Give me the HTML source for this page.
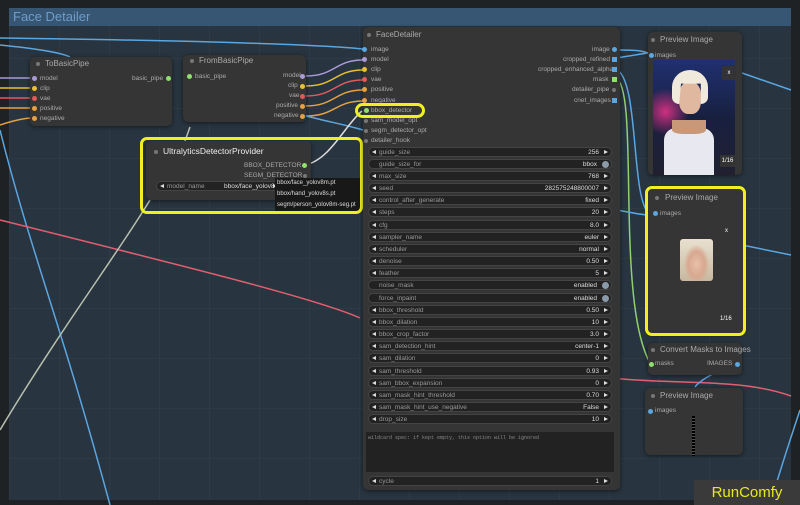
<!DOCTYPE html>
<html><head><meta charset="utf-8"><style>
*{margin:0;padding:0;box-sizing:border-box}
body{width:800px;height:505px;overflow:hidden;background:#1f2224;font-family:"Liberation Sans",sans-serif;position:relative;color:#aaa}
.grp{position:absolute;left:9px;top:8px;width:782px;height:492px;background:#28343f;
background-image:linear-gradient(#2e3a45 1px,transparent 1px),linear-gradient(90deg,#2e3a45 1px,transparent 1px);background-size:50px 50px}
.gt{position:absolute;left:9px;top:8px;width:782px;height:18px;background:#375673;color:#6f9dc8;font-size:13px;padding-left:4px;line-height:18px}
.node{position:absolute;background:#353535;border-radius:5px;box-shadow:0 1px 4px rgba(0,0,0,.5)}
.tt{position:absolute;font-size:8px;color:#aaa}
.dot{position:absolute;width:5px;height:5px;border-radius:50%}
.lab{position:absolute;font-size:6.5px;color:#aaa;white-space:nowrap}
.w{position:absolute;left:368px;width:244px;height:10px;background:#222;border-radius:5px;border:1px solid #444;font-size:6.5px;line-height:9px;color:#999}
.w .n{position:absolute;left:10px}
.w .v{position:absolute;right:12px;color:#ddd}
.w:before{content:"";position:absolute;left:3px;top:2px;border-right:4px solid #ddd;border-top:2.5px solid transparent;border-bottom:2.5px solid transparent}
.w:after{content:"";position:absolute;right:3px;top:2px;border-left:4px solid #ddd;border-top:2.5px solid transparent;border-bottom:2.5px solid transparent}
.w.t:before,.w.t:after{display:none}
.w.t .v{right:14px}
.w.t .tg{position:absolute;right:2px;top:1px;width:7px;height:7px;border-radius:50%;background:#8a9aa8}
.yb{position:absolute;border:3px solid #f0f020;border-radius:7px}
.g{position:absolute;width:4px;height:4px;border-radius:50%;background:#777}
</style></head><body>
<div class="grp"></div>
<div class="gt">Face Detailer</div>

<svg style="position:absolute;left:0;top:0" width="800" height="505" fill="none" stroke-width="1.5">
<path d="M0 38 C150 40,300 43,363 49" stroke="#5aa6e0"/>
<path d="M0 45 C30 48,60 52,70 57" stroke="#5aa6e0"/>
<path d="M0 78 L33 78" stroke="#a99ad8"/><path d="M0 88 L33 88" stroke="#e8c030"/>
<path d="M0 98 L33 98" stroke="#e05a5a"/><path d="M0 108 L33 108" stroke="#e8a040"/>
<path d="M0 125 C15 120,25 118,33 118" stroke="#e8a040"/>
<path d="M0 130 C30 250,60 320,110 505" stroke="#5aa6e0"/>
<path d="M306 76 C335 76,335 60,363 60" stroke="#a99ad8"/>
<path d="M306 86 C335 86,335 70,363 70" stroke="#e8c030"/>
<path d="M306 96 C335 96,335 80,363 80" stroke="#e05a5a"/>
<path d="M306 106 C335 106,335 90,363 90" stroke="#e8a040"/>
<path d="M306 116 C335 116,335 101,363 101" stroke="#e8a040"/>
<path d="M306 116 C330 122,350 126,363 130" stroke="#5aa6e0"/>
<path d="M305 165 C330 160,345 125,362 111" stroke="#ddd"/>
<path d="M0 220 C200 270,320 300,360 318" stroke="#e06070"/>
<path d="M610 378 C680 385,740 378,791 396" stroke="#e06070"/>
<path d="M150 200 C120 250,60 330,0 430" stroke="#b8c0b0"/>
<path d="M190 127 L180 155" stroke="#b8c0b0"/>
<path d="M616 50 C630 50,640 50,648 53" stroke="#5aa6e0"/>
<path d="M616 58 C630 56,640 54,648 53" stroke="#5aa6e0"/>
<path d="M616 69 C640 80,630 200,650 215" stroke="#5aa6e0"/>
<path d="M616 78 C640 90,615 300,650 363" stroke="#90d070"/>
<path d="M616 210 C630 212,640 215,650 215" stroke="#5aa6e0"/>
<path d="M742 73 L791 90" stroke="#5aa6e0"/><path d="M742 245 L791 255" stroke="#5aa6e0"/>
<path d="M738 362 C710 375,700 380,695 387" stroke="#5aa6e0"/>
<path d="M800 410 C790 440,780 470,770 505" stroke="#5aa6e0"/>
</svg>

<div class="node" style="left:30px;top:57px;width:142px;height:69px"></div>
<div class="g" style="left:36px;top:62px"></div><div class="tt" style="left:45px;top:59px">ToBasicPipe</div>
<div class="dot" style="left:32px;top:76px;background:#a99ad8"></div><div class="lab" style="left:40px;top:75px">model</div>
<div class="dot" style="left:32px;top:86px;background:#e8c030"></div><div class="lab" style="left:40px;top:85px">clip</div>
<div class="dot" style="left:32px;top:96px;background:#e05a5a"></div><div class="lab" style="left:40px;top:95px">vae</div>
<div class="dot" style="left:32px;top:106px;background:#e8a040"></div><div class="lab" style="left:40px;top:105px">positive</div>
<div class="dot" style="left:32px;top:116px;background:#e8a040"></div><div class="lab" style="left:40px;top:115px">negative</div>
<div class="lab" style="left:132px;top:75px">basic_pipe</div><div class="dot" style="left:166px;top:76px;background:#90e070"></div>

<div class="node" style="left:183px;top:55px;width:123px;height:67px"></div>
<div class="g" style="left:190px;top:59px"></div><div class="tt" style="left:199px;top:56px">FromBasicPipe</div>
<div class="dot" style="left:187px;top:74px;background:#90e070"></div><div class="lab" style="left:195px;top:73px">basic_pipe</div>
<div class="lab" style="left:283px;top:72px">model</div><div class="dot" style="left:300px;top:74px;background:#a99ad8"></div>
<div class="lab" style="left:288px;top:82px">clip</div><div class="dot" style="left:300px;top:84px;background:#e8c030"></div>
<div class="lab" style="left:289px;top:92px">vae</div><div class="dot" style="left:300px;top:94px;background:#e05a5a"></div>
<div class="lab" style="left:276px;top:102px">positive</div><div class="dot" style="left:300px;top:104px;background:#e8a040"></div>
<div class="lab" style="left:274px;top:112px">negative</div><div class="dot" style="left:300px;top:114px;background:#e8a040"></div>

<div class="node" style="left:146px;top:141px;width:165px;height:59px"></div>
<div class="g" style="left:154px;top:150px"></div><div class="tt" style="left:163px;top:146px;color:#eee;font-size:8.5px">UltralyticsDetectorProvider</div>
<div class="lab" style="left:244px;top:162px">BBOX_DETECTOR</div><div class="dot" style="left:302px;top:163px;background:#90e070"></div>
<div class="lab" style="left:244px;top:172px">SEGM_DETECTOR</div><div class="g" style="left:303px;top:174px"></div>
<div class="w" style="left:156px;top:181px;width:125px"><span class="n">model_name</span><span class="v" style="right:0">bbox/face_yolov8m</span></div>
<div style="position:absolute;left:275px;top:178px;width:86px;height:34px;background:#181818;font-size:6px;color:#ddd;line-height:11px;padding-left:2px;white-space:nowrap;overflow:hidden">bbox/face_yolov8m.pt<br>bbox/hand_yolov8s.pt<br>segm/person_yolov8m-seg.pt</div>
<div class="yb" style="left:140px;top:137px;width:223px;height:77px"></div>

<div class="node" style="left:363px;top:27px;width:257px;height:463px"></div>
<div class="g" style="left:367px;top:33px"></div><div class="tt" style="left:376px;top:30px">FaceDetailer</div>
<div class="dot" style="left:362px;top:47px;background:#5aa6e0"></div><div class="lab" style="left:371px;top:46px">image</div>
<div class="dot" style="left:362px;top:57px;background:#a99ad8"></div><div class="lab" style="left:371px;top:56px">model</div>
<div class="dot" style="left:362px;top:67px;background:#e8c030"></div><div class="lab" style="left:371px;top:66px">clip</div>
<div class="dot" style="left:362px;top:77px;background:#e05a5a"></div><div class="lab" style="left:371px;top:76px">vae</div>
<div class="dot" style="left:362px;top:87px;background:#e8a040"></div><div class="lab" style="left:371px;top:86px">positive</div>
<div class="dot" style="left:362px;top:98px;background:#e8a040"></div><div class="lab" style="left:371px;top:97px">negative</div>
<div class="dot" style="left:364px;top:108px;background:#90e070"></div><div class="lab" style="left:371px;top:107px">bbox_detector</div>
<div class="g" style="left:364px;top:119px"></div><div class="lab" style="left:371px;top:117px">sam_model_opt</div>
<div class="g" style="left:364px;top:129px"></div><div class="lab" style="left:371px;top:127px">segm_detector_opt</div>
<div class="g" style="left:364px;top:139px"></div><div class="lab" style="left:371px;top:137px">detailer_hook</div>
<div class="yb" style="left:355px;top:103px;width:70px;height:15px;border-radius:8px"></div>
<div class="lab" style="left:592px;top:46px">image</div><div class="dot" style="left:612px;top:47px;background:#5aa6e0"></div>
<div class="lab" style="left:563px;top:56px">cropped_refined</div><div class="dot" style="left:612px;top:57px;background:#5aa6e0;border-radius:0"></div>
<div class="lab" style="left:538px;top:66px">cropped_enhanced_alpha</div><div class="dot" style="left:612px;top:67px;background:#5aa6e0;border-radius:0"></div>
<div class="lab" style="left:593px;top:76px">mask</div><div class="dot" style="left:612px;top:77px;background:#90e070;border-radius:0"></div>
<div class="lab" style="left:572px;top:86px">detailer_pipe</div><div class="g" style="left:612px;top:88px"></div>
<div class="lab" style="left:574px;top:97px">cnet_images</div><div class="dot" style="left:612px;top:98px;background:#5aa6e0;border-radius:0"></div>

<div class="w" style="top:147px"><span class="n">guide_size</span><span class="v">256</span></div>
<div class="w t" style="top:159px"><span class="n">guide_size_for</span><span class="v">bbox</span><span class="tg"></span></div>
<div class="w" style="top:171px"><span class="n">max_size</span><span class="v">768</span></div>
<div class="w" style="top:183px"><span class="n">seed</span><span class="v">282575248800007</span></div>
<div class="w" style="top:195px"><span class="n">control_after_generate</span><span class="v">fixed</span></div>
<div class="w" style="top:207px"><span class="n">steps</span><span class="v">20</span></div>
<div class="w" style="top:220px"><span class="n">cfg</span><span class="v">8.0</span></div>
<div class="w" style="top:232px"><span class="n">sampler_name</span><span class="v">euler</span></div>
<div class="w" style="top:244px"><span class="n">scheduler</span><span class="v">normal</span></div>
<div class="w" style="top:256px"><span class="n">denoise</span><span class="v">0.50</span></div>
<div class="w" style="top:268px"><span class="n">feather</span><span class="v">5</span></div>
<div class="w t" style="top:280px"><span class="n">noise_mask</span><span class="v">enabled</span><span class="tg"></span></div>
<div class="w t" style="top:293px"><span class="n">force_inpaint</span><span class="v">enabled</span><span class="tg"></span></div>
<div class="w" style="top:305px"><span class="n">bbox_threshold</span><span class="v">0.50</span></div>
<div class="w" style="top:317px"><span class="n">bbox_dilation</span><span class="v">10</span></div>
<div class="w" style="top:329px"><span class="n">bbox_crop_factor</span><span class="v">3.0</span></div>
<div class="w" style="top:341px"><span class="n">sam_detection_hint</span><span class="v">center-1</span></div>
<div class="w" style="top:353px"><span class="n">sam_dilation</span><span class="v">0</span></div>
<div class="w" style="top:366px"><span class="n">sam_threshold</span><span class="v">0.93</span></div>
<div class="w" style="top:378px"><span class="n">sam_bbox_expansion</span><span class="v">0</span></div>
<div class="w" style="top:390px"><span class="n">sam_mask_hint_threshold</span><span class="v">0.70</span></div>
<div class="w" style="top:402px"><span class="n">sam_mask_hint_use_negative</span><span class="v">False</span></div>
<div class="w" style="top:414px"><span class="n">drop_size</span><span class="v">10</span></div>
<div style="position:absolute;left:366px;top:432px;width:248px;height:40px;background:#222;font-family:'Liberation Mono',monospace;font-size:5px;color:#888;padding:3px 2px">wildcard spec: if kept empty, this option will be ignored</div>
<div class="w" style="top:476px"><span class="n">cycle</span><span class="v">1</span></div>

<div class="node" style="left:648px;top:32px;width:94px;height:143px"></div>
<div class="g" style="left:651px;top:38px"></div><div class="tt" style="left:660px;top:35px">Preview Image</div>
<div class="dot" style="left:649px;top:53px;background:#5aa6e0"></div><div class="lab" style="left:655px;top:52px">images</div>
<div style="position:absolute;left:653px;top:60px;width:82px;height:115px;background:radial-gradient(circle at 15% 45%,#d03080 0,transparent 25%),linear-gradient(180deg,#203070,#182040 50%,#202030);"></div>
<div style="position:absolute;left:664px;top:128px;width:50px;height:47px;background:#e8e8f0;border-radius:12px 12px 0 0"></div>
<div style="position:absolute;left:672px;top:120px;width:34px;height:14px;background:#c89878;border-radius:0 0 30% 30%"></div>
<div style="position:absolute;left:679px;top:82px;width:22px;height:32px;background:#e0b8a0;border-radius:40%"></div>
<div style="position:absolute;left:672px;top:70px;width:36px;height:34px;background:#f0eadc;border-radius:50% 50% 20% 20%;clip-path:polygon(0 0,100% 0,100% 100%,80% 100%,80% 40%,25% 40%,20% 100%,0 100%)"></div>
<div style="position:absolute;left:722px;top:66px;width:14px;height:14px;background:#333;color:#fff;font-size:6px;text-align:center;line-height:14px">x</div>
<div style="position:absolute;left:720px;top:155px;width:15px;height:12px;background:#333;color:#fff;font-size:6px;text-align:center;line-height:12px">1/16</div>

<div class="node" style="left:648px;top:188px;width:96px;height:146px"></div>
<div class="g" style="left:655px;top:196px"></div><div class="tt" style="left:665px;top:193px">Preview Image</div>
<div class="dot" style="left:653px;top:211px;background:#5aa6e0"></div><div class="lab" style="left:660px;top:210px">images</div>
<div style="position:absolute;left:680px;top:239px;width:33px;height:42px;border-radius:3px;background:radial-gradient(ellipse at 50% 60%,#e8c0a8 0,#d8a890 35%,transparent 55%),linear-gradient(#e8e0d0,#c8b8a0)"></div>
<div style="position:absolute;left:725px;top:228px;font-size:6px;color:#fff">x</div>
<div style="position:absolute;left:720px;top:316px;font-size:6px;color:#fff">1/16</div>
<div class="yb" style="left:645px;top:186px;width:101px;height:150px"></div>

<div class="node" style="left:648px;top:343px;width:94px;height:32px"></div>
<div class="g" style="left:651px;top:348px"></div><div class="tt" style="left:660px;top:345px">Convert Masks to Images</div>
<div class="dot" style="left:649px;top:362px;background:#90e070"></div><div class="lab" style="left:655px;top:360px">masks</div>
<div class="lab" style="left:707px;top:360px">IMAGES</div><div class="dot" style="left:735px;top:362px;background:#5aa6e0"></div>

<div class="node" style="left:645px;top:388px;width:98px;height:67px"></div>
<div class="g" style="left:651px;top:394px"></div><div class="tt" style="left:660px;top:391px">Preview Image</div>
<div class="dot" style="left:648px;top:409px;background:#5aa6e0"></div><div class="lab" style="left:655px;top:407px">images</div>
<div style="position:absolute;left:692px;top:416px;width:3px;height:40px;background:repeating-linear-gradient(#000 0 2px,#555 2px 3px)"></div>

<div style="position:absolute;left:694px;top:480px;width:106px;height:25px;background:#3a3a3a;color:#e8e820;font-size:15px;line-height:25px;text-align:center">RunComfy</div>
</body></html>
